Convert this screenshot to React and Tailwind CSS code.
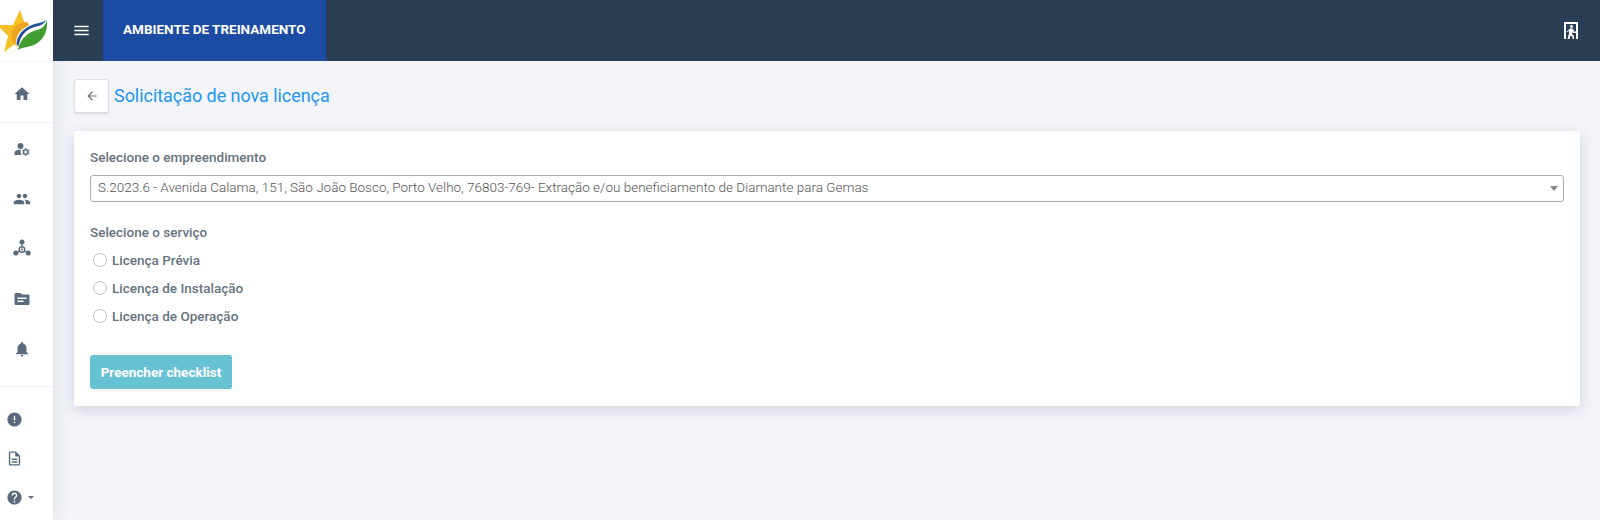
import React from 'react';
import {
  MdHome, MdManageAccounts, MdPeople, MdTopic, MdNotifications,
  MdError, MdOutlineDescription, MdHelp, MdMenu, MdArrowBack,
} from 'react-icons/md';

function Logo() {
  return (
    <svg width="48" height="54" viewBox="0 0 48 54" className="block">
      <path d="M20 10 L24.500 23 L14 33 L15 44 L4 52 L8 36 L-3 25 L13 25 Z" fill="#f5c026" />
      <path d="M28 22.500 C18 21 10 29 11.500 38 C12.500 42 14.500 45 17.500 47 C14.500 38 18 30 29 25.500 Z" fill="#eda51e" />
      <path d="M16 44 C17 32 28 25 37 23 C42 22 45 21 47 19 C45 24 41 26 36 27 C27 29 20 35 19 47 Z" fill="#1c4e96" stroke="#fff" strokeWidth="0.800" />
      <path d="M18 50 C20 39 28 32 37 30 C42 29 45 26 47 20 C48 32 43 41 34 45 C28 47 23 47 18 50 Z" fill="#3f9e2f" />
    </svg>
  );
}

function HubIcon(props) {
  return (
    <svg width="18" height="18" viewBox="0 0 18 18" fill="currentColor" {...props}>
      <circle cx="9" cy="3" r="2.500" />
      <circle cx="2.800" cy="14" r="2.500" />
      <circle cx="15.200" cy="14" r="2.500" />
      <circle cx="9" cy="10.500" r="2.800" fill="none" stroke="currentColor" strokeWidth="1.400" />
      <circle cx="9" cy="10.500" r="1" />
      <path d="M9 5V7.500M4.800 13L6.800 11.800M13.200 13L11.200 11.800" stroke="currentColor" strokeWidth="1.400" />
    </svg>
  );
}

function ExitIcon() {
  return (
    <svg width="14" height="17" viewBox="0 0 14 17" className="block">
      <path d="M0 0H14V17H12V2H2V17H0Z" fill="#fff" />
      <circle cx="7.500" cy="4.500" r="1.400" fill="#fff" />
      <path d="M6 6.500H9L10 9.500H12V11H9L8.500 10L8 12L10 14V17H8.500V15L6.500 13.500L5.500 17H3.500L5 11.500V8.500L4 10H2.500Z" fill="#fff" />
    </svg>
  );
}

function NavIcon({ icon: Icon, className = '' }) {
  return (
    <div className={`flex justify-center w-[44px] ${className}`}>
      <Icon size={18} className="text-[#5b6b7e]" />
    </div>
  );
}

function ServiceOption({ label }) {
  return (
    <label className="flex items-center h-[28px] pl-[3px]">
      <span className="w-[14px] h-[14px] rounded-full border border-[#bcbec0] bg-white mr-[5px]" />
      <span className="text-[13.5px] font-medium text-[#667380]">{label}</span>
    </label>
  );
}

export default function App() {
  return (
    <div className="relative flex w-full h-[520px] overflow-hidden bg-[#f3f5fa] font-['Roboto',sans-serif]">
      {/* Sidebar */}
      <aside className="relative z-10 w-[53px] shrink-0 bg-white shadow-[0_0_20px_rgba(60,70,90,0.14)]">
        <div className="h-[61px] overflow-hidden shadow-[0_1px_2px_rgba(0,0,0,0.04)]">
          <Logo />
        </div>
        <div className="pt-[24px]">
          <NavIcon icon={MdHome} />
          <div className="w-[65px] h-px bg-[#eceef1] mt-[19px] mb-[17px]" />
          <NavIcon icon={MdManageAccounts} className="mb-[32px]" />
          <NavIcon icon={MdPeople} className="mb-[31px]" />
          <NavIcon icon={HubIcon} className="mb-[33px]" />
          <NavIcon icon={MdTopic} className="mb-[32px]" />
          <NavIcon icon={MdNotifications} />
          <div className="w-[65px] h-px bg-[#eceef1] mt-[28px] mb-[24px]" />
          <div className="pl-[6px] text-[#5b6b7e]">
            <MdError size={17} className="mb-[22px]" />
            <MdOutlineDescription size={17} className="mb-[22px]" />
            <div className="flex items-center">
              <MdHelp size={17} />
              <span className="ml-[5px] w-0 h-0 border-x-[3px] border-x-transparent border-t-[3px] border-t-[#5b6b7e]" />
            </div>
          </div>
        </div>
      </aside>

      <div className="flex-1 min-w-0">
        {/* Top bar */}
        <header className="flex items-center h-[61px] bg-[#2a3f55]">
          <div className="flex items-center w-[50px] h-full pl-[19px]">
            <MdMenu size={19} className="text-white" />
          </div>
          <div className="flex items-center w-[223px] h-full pl-[20px] pb-[2px] bg-[#1c4ba3] text-white text-[13.5px] font-bold">
            AMBIENTE DE TREINAMENTO
          </div>
          <div className="ml-auto mr-[22px]">
            <ExitIcon />
          </div>
        </header>

        <main className="pl-[21px] pr-[20px]">
          <div className="flex items-center h-[70px]">
            <button className="flex items-center justify-center w-[35px] h-[34px] bg-white border border-[#dcdee2] rounded-[3px] shadow-[0_1px_2px_rgba(0,0,0,0.12)]">
              <MdArrowBack size={14} className="text-[#6d7883]" />
            </button>
            <h1 className="ml-[5px] pb-[2px] text-[18px] font-normal tracking-[-0.05px] text-[#2196f3]">Solicitação de nova licença</h1>
          </div>

          <section className="h-[275px] bg-white rounded-[2px] shadow-[0_4px_14px_rgba(60,70,90,0.2)] px-[16px] pt-[18px]">
            <div className="text-[13.5px] font-medium text-[#667380] leading-[17px]">Selecione o empreendimento</div>
            <div className="flex items-center justify-between h-[27px] mt-[9px] pl-[7px] pr-[5px] border border-[#ababab] rounded-[3px]">
              <span className="pb-[3px] text-[13.5px] font-light text-[#555]">S.2023.6 - Avenida Calama, 151, São João Bosco, Porto Velho, 76803-769- Extração e/ou beneficiamento de Diamante para Gemas</span>
              <span className="w-0 h-0 border-x-[4px] border-x-transparent border-t-[5px] border-t-[#888]" />
            </div>
            <div className="text-[13.5px] font-medium text-[#667380] leading-[17px] mt-[22px] mb-[5px]">Selecione o serviço</div>
            <ServiceOption label="Licença Prévia" />
            <ServiceOption label="Licença de Instalação" />
            <ServiceOption label="Licença de Operação" />
            <button className="block w-[142px] h-[34px] mt-[25px] rounded-[3px] bg-[#67c2d4] text-white text-[13.500px] font-bold">Preencher checklist</button>
          </section>
        </main>
      </div>
    </div>
  );
}
